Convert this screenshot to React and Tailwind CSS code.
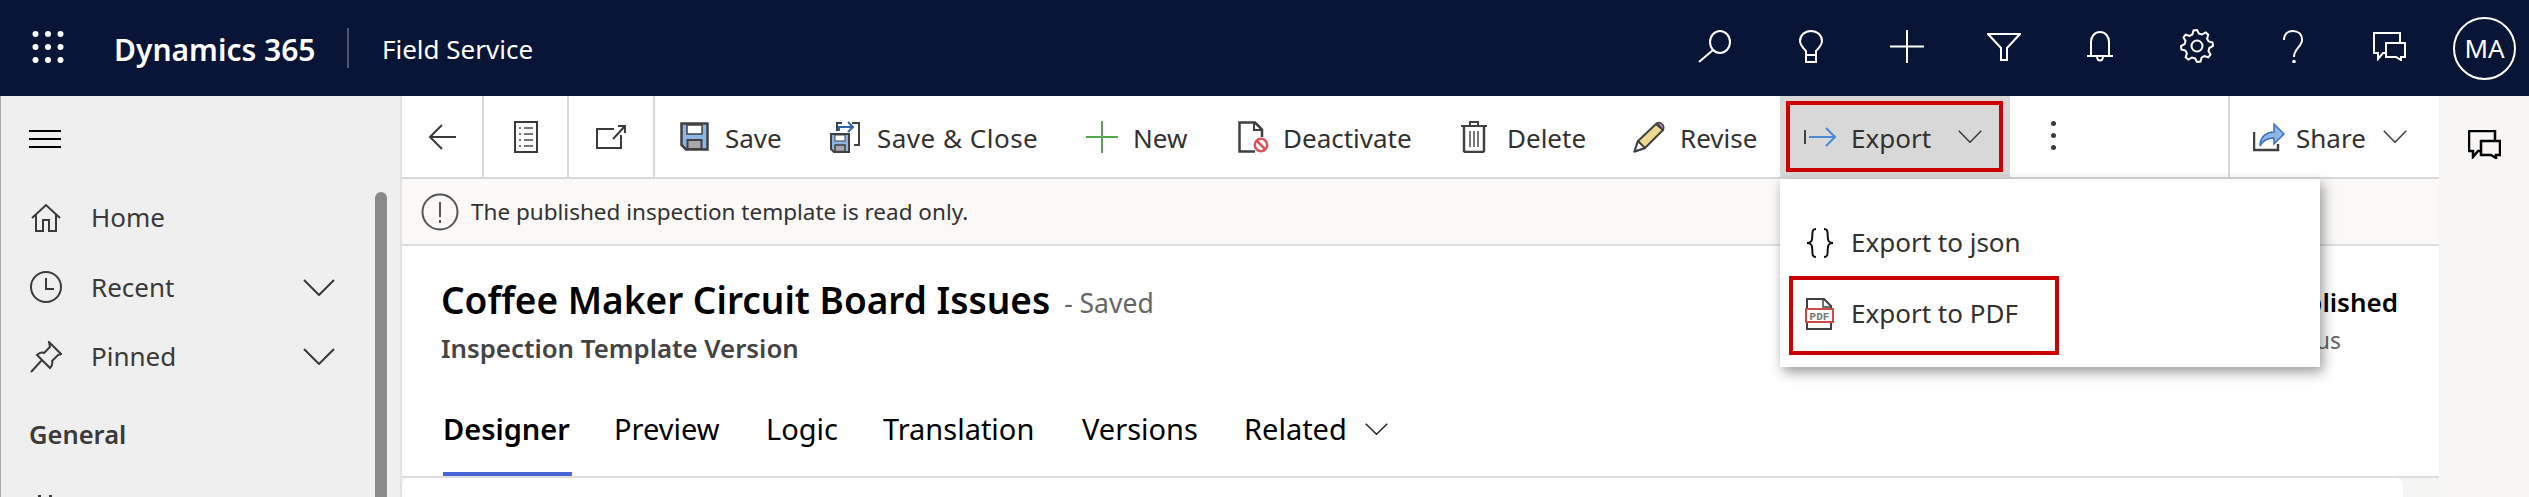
import { Fragment } from 'react'

const INK = '#3b3a39'

// шестерёнка с 8 зубцами для шапки
const gearPoints = (() => {
  const pts = []
  for (let i = 0; i < 8; i++) {
    const a = (i * Math.PI) / 4 - Math.PI / 8
    const step = Math.PI / 4
    const at = (r, t) => `${(17 + r * Math.cos(t)).toFixed(1)},${(17 + r * Math.sin(t)).toFixed(1)}`
    pts.push(at(12.5, a + step * 0.02), at(16, a + step * 0.22), at(16, a + step * 0.5), at(12.5, a + step * 0.7))
  }
  return pts.join(' ')
})()

const Waffle = () => (
  <svg width="32" height="32" viewBox="0 0 32 32" fill="white">
    {[3, 16, 29].map((y) => (
      <Fragment key={y}>
        <circle cx="3.5" cy={y} r="3" />
        <circle cx="16" cy={y} r="3" />
        <circle cx="28.5" cy={y} r="3" />
      </Fragment>
    ))}
  </svg>
)

const HeadIcon = ({ w, h, children }) => (
  <svg width={w} height={h} viewBox={`0 0 ${w} ${h}`} fill="none" stroke="white" strokeWidth="2">
    {children}
  </svg>
)

const ChatPair = ({ stroke = 'white', sw = 2 }) => (
  <svg width="33" height="29" viewBox="0 0 33 29" fill="none" stroke={stroke} strokeWidth={sw}>
    <path d="M27 10V1H1v20h4v6l5-6h3" />
    <path d="M13 11h19v14h-4v3l-5-3H13z" />
  </svg>
)

const HEADER_ICONS = [
  <HeadIcon w={34} h={33} key="search">
    <ellipse cx="23" cy="12" rx="10" ry="11" />
    <path d="M16 20 2 32" />
  </HeadIcon>,
  <HeadIcon w={24} h={33} key="bulb">
    <path d="M7 25v-4C4 18 1 15 1 11 1 5 6 1 12 1s11 4 11 10c0 4-3 7-6 10v4zM7 25v7h10v-7" />
  </HeadIcon>,
  <HeadIcon w={34} h={33} key="plus">
    <path d="M17 0v33M0 16.5h34" />
  </HeadIcon>,
  <HeadIcon w={34} h={29} key="funnel">
    <path d="M1 2h32L20 16v12h-6V16z" />
  </HeadIcon>,
  <HeadIcon w={26} h={32} key="bell">
    <path d="M0 26h26M4 26V12C4 6 8 2 13 2s9 4 9 10v14M10 26c0 6 6 6 6 0" />
  </HeadIcon>,
  <HeadIcon w={34} h={34} key="gear">
    <polygon points={gearPoints} />
    <circle cx="17" cy="17" r="5.5" />
  </HeadIcon>,
  <HeadIcon w={20} h={33} key="help">
    <path d="M1 10C1 4 5 1 10 1s9 3 9 9c0 7-8 8-8 17" />
    <circle cx="11" cy="31.5" r="0.8" fill="white" />
  </HeadIcon>,
  <ChatPair key="chat" />
]

const Header = () => (
  <header className="h-[96px] shrink-0 bg-[#091536] flex items-center text-white">
    <div className="ml-[32px] w-[82px] mb-[2px]">
      <Waffle />
    </div>
    <span className="w-[233px] mt-[2px] text-[30px] font-semibold whitespace-nowrap">Dynamics 365</span>
    <div className="w-[2px] h-[40px] bg-[#4a5672]" />
    <span className="ml-[33px] mt-[2px] text-[26px] whitespace-nowrap">Field Service</span>
    <div className="ml-auto flex items-center">
      {HEADER_ICONS.map((icon, i) => (
        <div key={i} className="w-[96.5px] flex justify-center mb-[4px]">
          {icon}
        </div>
      ))}
      <div className="ml-[15px] mr-[13px] w-[63px] h-[63px] rounded-full border-2 border-white flex items-center justify-center text-[26px]">
        MA
      </div>
    </div>
  </header>
)

const Chevron = ({ w = 32, h = 17, stroke = INK }) => (
  <svg width={w} height={h} viewBox="0 0 32 17" preserveAspectRatio="none" fill="none" stroke={stroke} strokeWidth="2">
    <path d="M1 1l15 15L31 1" />
  </svg>
)

const NavIcon = ({ children }) => (
  <svg width="32" height="32" viewBox="0 0 32 32" fill="none" stroke={INK} strokeWidth="2">
    {children}
  </svg>
)

const NAV_ITEMS = [
  {
    label: 'Home',
    icon: (
      <NavIcon>
        <path d="M2 16 16 3l14 13M6 13v16h7v-11h6v11h7V13" />
      </NavIcon>
    )
  },
  {
    label: 'Recent',
    chevron: true,
    icon: (
      <NavIcon>
        <circle cx="16" cy="16" r="15" />
        <path d="M16 7v11h8" />
      </NavIcon>
    )
  },
  {
    label: 'Pinned',
    chevron: true,
    icon: (
      <NavIcon>
        <path d="M1 31 12 19M19 1l12 12-3 1-6 6c1 3 0 5-2 7L7 14c2-2 5-3 7-2l6-6z" />
      </NavIcon>
    )
  }
]

const Sidebar = () => (
  <aside className="relative w-[400px] shrink-0 bg-[#efefef] border-l border-[#aaaaaa] overflow-hidden text-[26px] text-[#3b3a39]">
    <div className="h-[87px] pl-[28px] flex items-center">
      <div className="w-[32px] flex flex-col gap-[6px] mb-[2px]">
        <div className="h-[2px] bg-black" />
        <div className="h-[2px] bg-black" />
        <div className="h-[2px] bg-black" />
      </div>
    </div>
    {NAV_ITEMS.map((item) => (
      <div key={item.label} className="h-[69.5px] pl-[29px] pr-[65px] flex items-center">
        <div className="w-[61px]">{item.icon}</div>
        <span className="flex-1">{item.label}</span>
        {item.chevron && <Chevron />}
      </div>
    ))}
    <div className="h-[86px] pl-[28px] flex items-center font-semibold text-[25.5px]">General</div>
    <div className="mt-[17px] pl-[37px] flex gap-[8px]">
      <div className="w-[3px] h-[4px] bg-[#3b3a39]" />
      <div className="w-[3px] h-[4px] bg-[#3b3a39]" />
    </div>
    {/* полоса прокрутки */}
    <div className="absolute left-[374px] top-[96px] bottom-0 w-[12px] bg-[#8a8a8a] rounded-t-full" />
  </aside>
)

const SaveIcon = () => (
  <svg width="29" height="29" viewBox="0 0 29 29">
    <path d="M1.5 1.5h26v26H6l-4.5-4.5z" fill="#8db6e6" stroke="#404040" strokeWidth="2.5" />
    <rect x="7" y="3" width="15" height="9" fill="white" stroke="#404040" strokeWidth="1.5" />
    <rect x="7.5" y="18" width="14" height="9" fill="#a6a6a6" stroke="#404040" strokeWidth="2" />
  </svg>
)

const SaveCloseIcon = () => (
  <svg width="30" height="32" viewBox="0 0 30 32" fill="none">
    <path d="M7 10V2h5M22 2h7v22h-5" stroke="#404040" strokeWidth="2" />
    <path d="M9 10V6h14M18 1l5 5-5 5" stroke="#2f62b5" strokeWidth="2" />
    <path d="M1 13h18v18H4l-3-3z" fill="#8db6e6" stroke="#404040" strokeWidth="2" />
    <rect x="5" y="14" width="10" height="6" fill="white" stroke="#404040" strokeWidth="1" />
    <rect x="5" y="24" width="10" height="6.5" fill="#a6a6a6" stroke="#404040" strokeWidth="1.5" />
  </svg>
)

const PlusIcon = () => (
  <svg width="32" height="32" viewBox="0 0 32 32" stroke="#57a64f" strokeWidth="2">
    <path d="M16 0v32M0 16h32" />
  </svg>
)

const DeactivateIcon = () => (
  <svg width="31" height="32" viewBox="0 0 31 32" fill="none">
    <path d="M17 30.5H1.5v-29H17l7 7V16" stroke="#404040" strokeWidth="2.5" />
    <path d="M16 1v8h8" stroke="#404040" strokeWidth="2" />
    <circle cx="23" cy="24" r="6.2" fill="white" stroke="#d9555c" strokeWidth="2.5" />
    <path d="M19 20l8 8" stroke="#d9555c" strokeWidth="2.5" />
  </svg>
)

const TrashIcon = () => (
  <svg width="26" height="32" viewBox="0 0 26 32" fill="none" stroke="#404040">
    <path d="M0 5h26M9 5V1h8v4" strokeWidth="2" />
    <path d="M3 5v25l1 1h18l1-1V5" strokeWidth="2.5" />
    <path d="M9 10v16M13 10v16M17 10v16" stroke="#777" strokeWidth="2" />
  </svg>
)

const PencilIcon = () => (
  <svg width="32" height="32" viewBox="0 0 32 32">
    <path d="M1.5 30.5 5 20 23 3l7 6-18 18z" fill="#efd88f" stroke="#404040" strokeWidth="2" strokeLinejoin="round" />
    <path d="M1.5 30.5 5 20l7 7z" fill="white" stroke="#404040" strokeWidth="2" strokeLinejoin="round" />
    <path d="M24 2c2-1 4 0 5.500 1.500 1.500 2 1.500 4 0.500 5.500z" fill="#c290d6" stroke="#404040" strokeWidth="1.500" />
  </svg>
)

const ExportIcon = () => (
  <svg width="33" height="22" viewBox="0 0 33 22" fill="none">
    <path d="M1 4v14" stroke="#404040" strokeWidth="2" />
    <path d="M5 11h26M22 2l9 9-9 9" stroke="#4a8ad4" strokeWidth="2" />
  </svg>
)

const ShareIcon = () => (
  <svg width="32" height="30" viewBox="0 0 32 30" fill="none">
    <path d="M1 10v18h24v-6" stroke="#404040" strokeWidth="2.5" />
    <path d="M7 24c0-9 6-14 14-14V2l10 10-10 10v-6c-6 0-11 2-14 8z" fill="#8db6e6" stroke="#3a6fc0" strokeWidth="1.500" />
  </svg>
)

const TOOL_BUTTONS = [
  { label: 'Save', icon: <SaveIcon />, width: 'w-[150px]', iconBox: 'w-[45px]' },
  { label: 'Save & Close', icon: <SaveCloseIcon />, width: 'w-[256px]', iconBox: 'w-[47px]', text: 'tracking-[0.5px]' },
  { label: 'New', icon: <PlusIcon />, width: 'w-[152px]', iconBox: 'w-[47px]' },
  { label: 'Deactivate', icon: <DeactivateIcon />, width: 'w-[223px]', iconBox: 'w-[45px]' },
  { label: 'Delete', icon: <TrashIcon />, width: 'w-[172px]', iconBox: 'w-[46px]' },
  { label: 'Revise', icon: <PencilIcon />, width: 'w-[172px]', iconBox: 'w-[47px]' }
]

const TAB_ITEMS = [
  { label: 'Preview', width: 'w-[152px]' },
  { label: 'Logic', width: 'w-[117px]' },
  { label: 'Translation', width: 'w-[199px]' },
  { label: 'Versions', width: 'w-[162px]' }
]

const Toolbar = () => (
  <div className="h-[83px] shrink-0 border-b-2 border-[#d8d8d8] flex text-[26px] text-[#323130]">
    <div className="w-[82px] border-r-2 border-[#d8d8d8] flex items-center justify-center">
      <svg width="28" height="26" viewBox="0 0 28 26" fill="none" stroke={INK} strokeWidth="2">
        <path d="M28 13H2M14 1 2 13l12 12" />
      </svg>
    </div>
    <div className="w-[85px] border-r-2 border-[#d8d8d8] flex items-center justify-center">
      <svg width="24" height="32" viewBox="0 0 24 32" fill="none" stroke={INK}>
        <rect x="1" y="1" width="22" height="30" strokeWidth="2" />
        <path d="M5 7h2M10 7h9M5 13h2M10 13h9M5 19h2M10 19h9M5 25h2M10 25h9" stroke="#777" strokeWidth="2" />
      </svg>
    </div>
    <div className="w-[86px] border-r-2 border-[#d8d8d8] flex items-center justify-center">
      <svg width="30" height="24" viewBox="0 0 30 24" fill="none" stroke={INK} strokeWidth="2">
        <path d="M18 4H1v19h24V10M17 14 29 1M22 1h7v7" />
      </svg>
    </div>
    {TOOL_BUTTONS.map((btn) => (
      <button key={btn.label} className={`${btn.width} pl-[25px] flex items-center`}>
        <span className={`${btn.iconBox} flex`}>{btn.icon}</span>
        <span className={`mt-[3px] whitespace-nowrap ${btn.text || ''}`}>{btn.label}</span>
      </button>
    ))}
    {/* выделенная кнопка Export */}
    <div className="w-[230px] h-[83px] bg-[#d8d8d8] pl-[6px] pr-[7px] pt-[5px] pb-[7px]">
      <div className="h-full border-4 border-[#cc0000] pl-[14px] pr-[17px] flex items-center">
        <span className="w-[47px] flex">
          <ExportIcon />
        </span>
        <span className="flex-1 mt-[3px]">Export</span>
        <Chevron w={24} h={13} />
      </div>
    </div>
    <div className="w-[218px] pl-[41px] flex items-center">
      <div className="flex flex-col gap-[7px] mb-[2px]">
        <div className="w-[5px] h-[5px] rounded-full bg-[#3b3a39]" />
        <div className="w-[5px] h-[5px] rounded-full bg-[#3b3a39]" />
        <div className="w-[5px] h-[5px] rounded-full bg-[#3b3a39]" />
      </div>
    </div>
    <div className="flex-1 border-l-2 border-[#d8d8d8] pl-[23px] flex items-center">
      <span className="w-[43px] flex">
        <ShareIcon />
      </span>
      <span className="w-[87px] mt-[3px]">Share</span>
      <Chevron w={24} h={13} />
    </div>
  </div>
)

const ExportMenu = () => (
  <div className="absolute left-[1378px] top-[83px] z-10 w-[540px] h-[188px] bg-white shadow-[3px_5px_12px_rgba(0,0,0,0.4)] pt-[42px] text-[26px] text-[#323130]">
    <div className="h-[43px] pl-[26px] flex items-center">
      <span className="w-[45px] flex">
        <svg width="28" height="30" viewBox="0 0 28 30" fill="none" stroke="#111" strokeWidth="2">
          <path d="M10 1C5 1 7 6 6 11c0 2-2 4-5 4 3 0 5 2 5 4 1 5-1 10 4 10M18 1c5 0 3 5 4 10 0 2 2 4 5 4-3 0-5 2-5 4-1 5 1 10-4 10" />
        </svg>
      </span>
      <span>Export to json</span>
    </div>
    <div className="ml-[9px] mt-[12px] w-[270px] h-[79px] border-4 border-[#cc0000] pl-[12px] pb-[4px] flex items-center">
      <span className="relative w-[46px] h-[32px] flex">
        <svg width="29" height="32" viewBox="0 0 29 32" fill="none">
          <path d="M2 31V1h17l7 7v23z" fill="white" stroke="#404040" strokeWidth="2" />
          <path d="M18 1v8h8" stroke="#404040" strokeWidth="1.500" />
          <rect x="1" y="11" width="27" height="13" fill="white" stroke="#d04a4a" strokeWidth="2" />
          <text x="14.500" y="21.500" textAnchor="middle" fontSize="11" fontWeight="700" fill="#777" fontFamily="Liberation Mono, monospace">
            PDF
          </text>
        </svg>
      </span>
      <span>Export to PDF</span>
    </div>
  </div>
)

const Tabs = () => (
  <div className="mt-[42px] ml-[41px] h-[70px] flex text-[29px] text-black">
    <div className="w-[129px] mr-[42px] h-[70px] pb-[20px] border-b-4 border-[#4a64d8] flex items-center font-semibold whitespace-nowrap">
      Designer
    </div>
    {TAB_ITEMS.map((tab) => (
      <div key={tab.label} className={`${tab.width} h-[70px] pb-[24px] flex items-center whitespace-nowrap`}>
        {tab.label}
      </div>
    ))}
    <div className="h-[70px] pb-[24px] flex items-center whitespace-nowrap">
      <span className="w-[121px]">Related</span>
      <Chevron w={23} h={12} stroke="#222" />
    </div>
  </div>
)

const App = () => (
  <div
    className="w-[2529px] h-[497px] overflow-hidden flex flex-col bg-white"
    style={{ fontFamily: '"Noto Sans", sans-serif' }}
  >
    <Header />
    <div className="flex flex-1 min-h-0">
      <Sidebar />
      <main className="relative flex-1 min-w-0 flex flex-col border-l-2 border-[#e2e2e2]">
        <Toolbar />
        {/* уведомление */}
        <div className="h-[67px] shrink-0 bg-[#faf9f8] border-b-2 border-[#dedede] pl-[19px] flex items-center text-[22.5px] text-[#323130]">
          <svg width="38" height="38" viewBox="0 0 38 38" fill="none" stroke="#555" strokeWidth="2">
            <circle cx="19" cy="19" r="17.500" />
            <path d="M19 9v15M19 27v3" />
          </svg>
          <span className="ml-[12px]">The published inspection template is read only.</span>
        </div>
        <div className="h-[232px] shrink-0 border-b-2 border-[#dedede] pt-[32px]">
          <div className="pl-[39px] pr-[41px] flex justify-between">
            <div>
              <div className="h-[44px] flex items-center whitespace-nowrap">
                <span className="text-[37px] font-semibold text-black">Coffee Maker Circuit Board Issues</span>
                <span className="ml-[14px] mt-[8px] text-[26.5px] text-[#666666]">- Saved</span>
              </div>
              <div className="mt-[10px] h-[32px] flex items-center text-[25.8px] font-semibold text-[#444444] whitespace-nowrap">
                Inspection Template Version
              </div>
            </div>
            <div>
              <div className="mt-[6px] h-[36px] flex items-center text-[26px] font-semibold text-black">Published</div>
              <div className="h-[40px] flex items-center text-[23px] text-[#666666]">Status</div>
            </div>
          </div>
          <Tabs />
        </div>
        <div className="flex-1 bg-[#f5f5f4] pr-[36px]">
          <div className="h-full bg-white rounded-t-lg" />
        </div>
        <ExportMenu />
      </main>
      <div className="w-[90px] shrink-0 bg-[#f7f6f5] pt-[34px] flex justify-center">
        <div>
          <ChatPair stroke="black" sw={2.5} />
        </div>
      </div>
    </div>
  </div>
)

export default App
